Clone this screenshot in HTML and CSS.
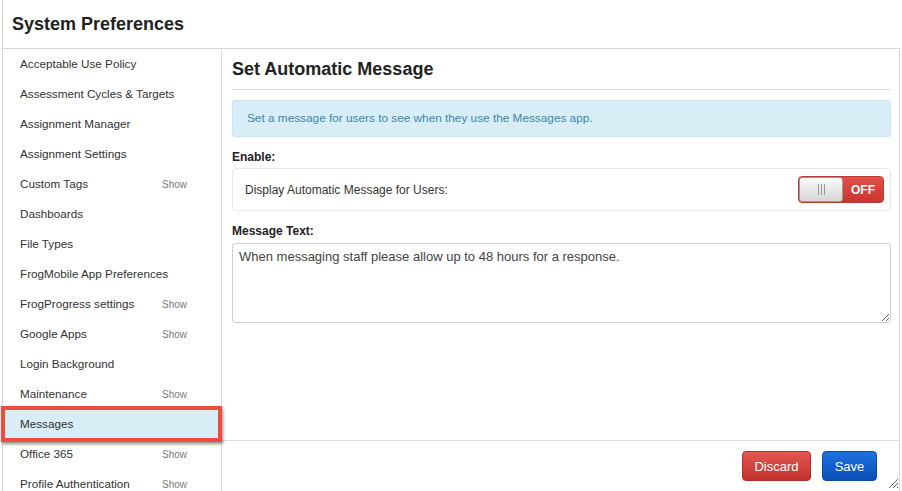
FILE: index.html
```html
<!DOCTYPE html>
<html lang="en">
<head>
    <meta charset="UTF-8">
    <title>System Preferences</title>
    <link rel="stylesheet" href="styles.css">
</head>
<body>
    <div class="window">
        <div class="window-head">
            <h1>System Preferences</h1>
        </div>
        <div class="window-body">
            <ul class="side-list">
                <li class="side-item">Acceptable Use Policy</li>
                <li class="side-item">Assessment Cycles &amp; Targets</li>
                <li class="side-item">Assignment Manager</li>
                <li class="side-item">Assignment Settings</li>
                <li class="side-item">Custom Tags <span class="show">Show</span></li>
                <li class="side-item">Dashboards</li>
                <li class="side-item">File Types</li>
                <li class="side-item">FrogMobile App Preferences</li>
                <li class="side-item">FrogProgress settings <span class="show">Show</span></li>
                <li class="side-item">Google Apps <span class="show">Show</span></li>
                <li class="side-item">Login Background</li>
                <li class="side-item">Maintenance <span class="show">Show</span></li>
                <li class="side-item selected">Messages</li>
                <li class="side-item">Office 365 <span class="show">Show</span></li>
                <li class="side-item">Profile Authentication <span class="show">Show</span></li>
            </ul>

            <div class="main">
                <div class="main-content">
                    <h2 class="main-title">Set Automatic Message</h2>

                    <div class="info">Set a message for users to see when they use the Messages app.</div>

                    <label class="field-label">Enable:</label>
                    <div class="option-box">
                        <span>Display Automatic Message for Users:</span>
                        <div class="toggle">
                            <span class="knob"><span class="grip"></span></span>
                            <span class="toggle-off">OFF</span>
                        </div>
                    </div>

                    <label class="field-label">Message Text:</label>
                    <textarea class="message">When messaging staff please allow up to 48 hours for a response.</textarea>
                </div>

                <div class="main-foot">
                    <button class="btn btn-discard">Discard</button>
                    <button class="btn btn-save">Save</button>
                </div>
            </div>
        </div>

        <svg class="resize-grip" width="12" height="12" viewBox="0 0 12 12">
            <line x1="11" y1="2" x2="2" y2="11" stroke="#666" stroke-width="1"/>
            <line x1="11" y1="6" x2="6" y2="11" stroke="#666" stroke-width="1"/>
            <line x1="11" y1="10" x2="10" y2="11" stroke="#666" stroke-width="1"/>
        </svg>
    </div>
</body>
</html>
```

FILE: styles.css
```css
* {
    margin: 0;
    padding: 0;
    box-sizing: border-box;
}

body {
    font-family: "Liberation Sans", Arial, sans-serif;
    color: #333;
    background: #fff;
    overflow: hidden;
}

.window {
    position: relative;
    margin-left: 2px;
    width: 898px;
    height: 491px;
    border-left: 1px solid #d4d4d4;
    display: flex;
    flex-direction: column;
}

.window-head {
    height: 49px;
    border-bottom: 1px solid #d9d9d9;
    padding: 13px 0 0 9px;
}

.window-head h1 {
    font-size: 18px;
    font-weight: bold;
    color: #222;
    line-height: 22px;
}

.window-body {
    flex: 1;
    display: flex;
    min-height: 0;
}

/* sidebar */
.side-list {
    list-style: none;
    width: 219px;
    border-right: 1px solid #dcdcdc;
}

.side-item {
    position: relative;
    height: 30px;
    display: flex;
    align-items: center;
    padding: 0 0 2px 17px;
    font-size: 11.7px;
    color: #333;
}

.side-item .show {
    position: absolute;
    left: 159px;
    margin-top: 2px;
    font-size: 10px;
    color: #7a7a7a;
}

.side-item.selected {
    background: #d9edf7;
}

.side-item.selected::after {
    content: "";
    position: absolute;
    top: -3px;
    bottom: -3px;
    left: -2px;
    right: -1px;
    border: 4px solid #ef4c3e;
    box-shadow: 1px 2px 3px rgba(0, 0, 0, 0.45);
}

/* main panel */
.main {
    width: 678px;
    border-right: 1px solid #d9d9d9;
    display: flex;
    flex-direction: column;
}

.main-content {
    flex: 1;
    padding: 0 8px 0 10px;
}

.main-title {
    font-size: 18px;
    font-weight: bold;
    color: #222;
    line-height: 22px;
    margin-top: 9px;
    padding-bottom: 9px;
    border-bottom: 1px solid #e0e0e0;
}

.info {
    margin-top: 10px;
    height: 37px;
    background: #d9edf7;
    border: 1px solid #c8e6f2;
    border-radius: 3px;
    color: #3a87ad;
    font-size: 11.8px;
    line-height: 35px;
    padding-left: 14px;
}

.field-label {
    display: block;
    font-size: 12px;
    font-weight: bold;
    color: #222;
    line-height: 16px;
    margin-top: 12px;
}

.option-box {
    margin-top: 3px;
    height: 43px;
    border: 1px solid #e8e8e8;
    border-radius: 4px;
    display: flex;
    align-items: center;
    justify-content: space-between;
    padding: 0 6px 0 12px;
    font-size: 12px;
    color: #333;
}

.toggle {
    width: 86px;
    height: 27px;
    display: flex;
    border: 1px solid #b93a33;
    border-radius: 4px;
    background: linear-gradient(#e2504a, #c9352f);
    overflow: hidden;
}

.knob {
    width: 44px;
    height: 100%;
    background: linear-gradient(#fafafa, #d6d6d6);
    border: 1px solid #9a9a9a;
    border-radius: 3px;
    display: flex;
    align-items: center;
    justify-content: center;
}

.grip {
    width: 7px;
    height: 11px;
    border-left: 1px solid #999;
    border-right: 1px solid #999;
    position: relative;
}

.grip::after {
    content: "";
    position: absolute;
    left: 2px;
    top: 0;
    height: 11px;
    border-left: 1px solid #999;
}

.toggle-off {
    flex: 1;
    color: #fff;
    font-size: 12px;
    font-weight: bold;
    display: flex;
    align-items: center;
    justify-content: center;
}

.message {
    display: block;
    margin-top: 4px;
    width: 100%;
    height: 80px;
    border: 1px solid #cfcfcf;
    border-radius: 3px;
    padding: 4px 6px;
    font-family: "Liberation Sans", Arial, sans-serif;
    font-size: 13px;
    line-height: 18px;
    color: #444;
    resize: vertical;
}

.main-foot {
    height: 51px;
    border-top: 1px solid #dedede;
    display: flex;
    justify-content: flex-end;
    gap: 11px;
    padding: 10px 22px 0 0;
}

.btn {
    height: 30px;
    border-radius: 4px;
    font-family: "Liberation Sans", Arial, sans-serif;
    font-size: 13px;
    color: #fff;
    padding: 0 10px;
}

.btn-discard {
    width: 69px;
    background: linear-gradient(#e25653, #c2322d);
    border: 1px solid #b52b27;
}

.btn-save {
    width: 55px;
    background: linear-gradient(#1d72e0, #0a4eb5);
    border: 1px solid #0a4aa8;
}

.resize-grip {
    position: absolute;
    right: 1px;
    bottom: 2px;
}
```
